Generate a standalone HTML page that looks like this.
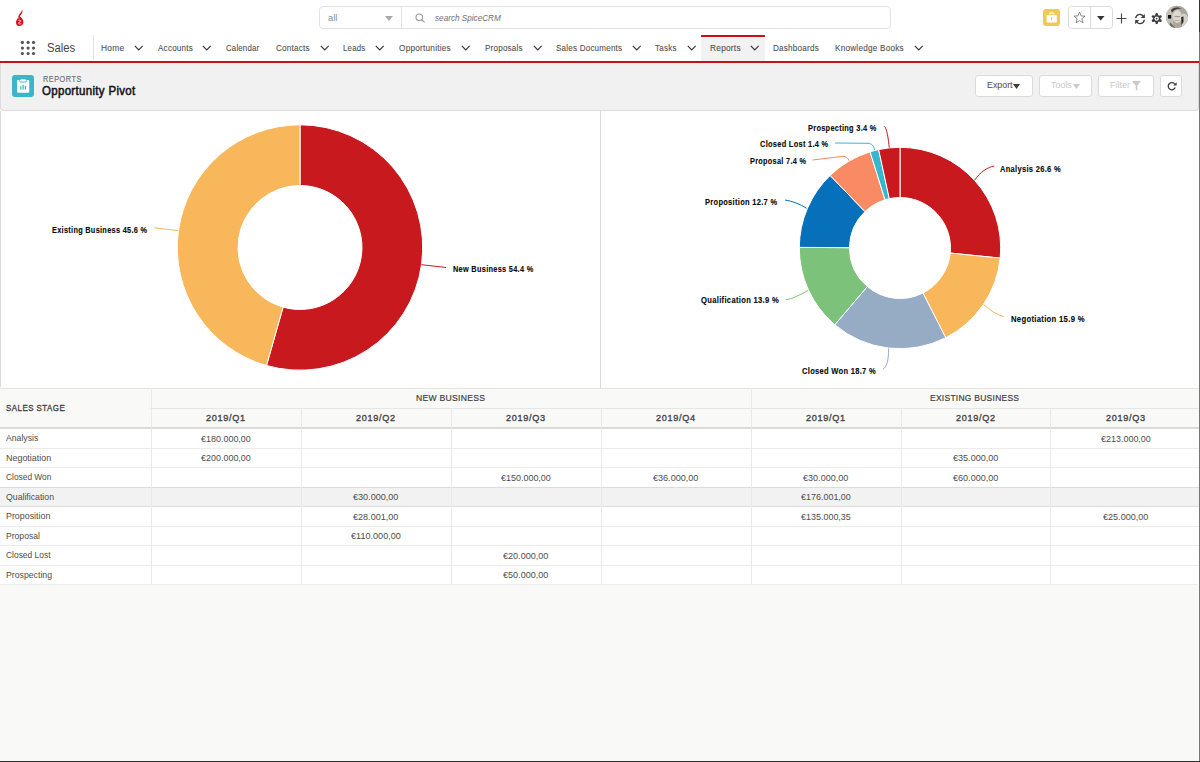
<!DOCTYPE html>
<html><head><meta charset="utf-8"><style>
*{margin:0;padding:0;box-sizing:border-box}
html,body{width:1200px;height:762px;overflow:hidden;background:#f9f9f7;font-family:"Liberation Sans", sans-serif;color:#3e3e3c}
.abs{position:absolute}
.t{position:absolute;white-space:nowrap;line-height:1;transform-origin:0 0}
.btn{position:absolute;top:75px;height:21.5px;background:#fff;border:1px solid #dddbda;border-radius:3px}
</style></head><body>
<div class="abs" style="left:0;top:0;width:1200px;height:61px;background:#fff"></div>
<svg class="abs" style="left:14px;top:8px" width="12" height="20" viewBox="0 0 12 20">
 <path d="M8.2 1.7 C8.9 3.4 8.3 5.2 7.1 6.5 C6.2 7.5 5.6 8.3 5.9 9.4 L4.3 9.6 C4.2 7.8 5 6.4 6.1 5.2 C7 4.2 7.8 3.1 8.2 1.7Z" fill="#d0121c"/>
 <path d="M5.9 8.6 C7.6 9.6 9.4 11.6 9.4 14 C9.4 16.4 7.6 18.1 5.6 18.1 C3.6 18.1 2 16.5 2 14.4 C2 12.4 3.3 11 4.3 9.6 Z" fill="#d0121c"/>
 <path d="M4.6 12.4 C5.6 11.9 7 12.3 6.8 13.3 C6.6 14.2 4.6 14.1 4.5 15.1 C4.4 16 6.2 16.4 7.2 15.5" fill="none" stroke="#fff" stroke-width="0.8"/>
 <path d="M3.6 10.8 C4.2 10.2 4.8 10 5.4 10.2" fill="none" stroke="#fff" stroke-width="0.5"/>
</svg>
<div class="abs" style="left:319px;top:6px;width:572px;height:22.5px;border:1px solid #e2e2e0;border-radius:4px;background:#fff"></div>
<div class="abs" style="left:401px;top:7px;width:1px;height:20.5px;background:#e2e2e0"></div>
<svg class="abs" style="left:384.5px;top:15.5px" width="8" height="5" viewBox="0 0 8 5"><path d="M0 0H8L4 5Z" fill="#a8a8a8"/></svg>
<svg class="abs" style="left:415px;top:13px" width="11" height="10" viewBox="0 0 11 10"><circle cx="4.3" cy="4.3" r="3.3" fill="none" stroke="#9a9a9a" stroke-width="1.1"/><path d="M6.7 6.7 L9.6 9.4" stroke="#9a9a9a" stroke-width="1.2"/></svg>
<div class="abs" style="left:1043px;top:9px;width:17px;height:17px;background:#f1c851;border-radius:3px"></div>
<svg class="abs" style="left:1043px;top:9px" width="17" height="17" viewBox="0 0 17 17"><rect x="3.6" y="6" width="10.2" height="7.4" rx="0.6" fill="#fff"/><path d="M6.2 5.2 A2.6 1.9 0 0 1 11.2 5.2" fill="none" stroke="#fff" stroke-width="1.2"/><path d="M8.7 7.8 C9.6 8.6 9.6 9.8 8.7 10.4 C7.8 9.8 7.8 8.6 8.7 7.8Z M8.3 10.2 H9.1 V11.8 H8.3Z" fill="#f0c64e"/></svg>
<div class="abs" style="left:1068px;top:6px;width:44.5px;height:22.5px;border:1px solid #dddbda;border-radius:3.5px;background:#fff"></div>
<div class="abs" style="left:1090px;top:6.5px;width:1px;height:21.5px;background:#dddbda"></div>
<svg class="abs" style="left:1073px;top:11px" width="13" height="13" viewBox="0 0 13 13"><path d="M6.5 1 L8 4.9 L12 5.1 L8.9 7.6 L9.9 11.8 L6.5 9.6 L3.1 11.8 L4.1 7.6 L1 5.1 L5 4.9Z" fill="none" stroke="#6a6a6a" stroke-width="0.75" stroke-linejoin="round"/></svg>
<svg class="abs" style="left:1097px;top:16px" width="7.5" height="4.5" viewBox="0 0 7.5 4.5"><path d="M0 0H7.5L3.75 4.5Z" fill="#333"/></svg>
<svg class="abs" style="left:1116px;top:13px" width="11" height="11" viewBox="0 0 11 11"><path d="M5.5 0.5V10.5M0.5 5.5H10.5" stroke="#4a4a4a" stroke-width="1.15"/></svg>
<svg class="abs" style="left:1134px;top:12.5px" width="12" height="12" viewBox="0 0 12 12"><path d="M1.7 5.2 A4.1 4.1 0 0 1 9.2 3.2" fill="none" stroke="#3a3a3a" stroke-width="1.3"/><path d="M10.3 6.8 A4.1 4.1 0 0 1 2.8 8.8" fill="none" stroke="#3a3a3a" stroke-width="1.3"/><path d="M10.8 0.9 V5 H6.7Z" fill="#3a3a3a"/><path d="M1.2 11.2 V7.1 H5.3Z" fill="#3a3a3a"/></svg>
<svg class="abs" style="left:1151px;top:13px" width="12" height="12" viewBox="0 0 12 12"><g fill="#3a3a3a"><circle cx="5.7" cy="5.6" r="3.7"/><circle cx="5.7" cy="1.4" r="1.35"/><circle cx="5.7" cy="9.8" r="1.35"/><circle cx="2.06" cy="3.5" r="1.35"/><circle cx="9.34" cy="3.5" r="1.35"/><circle cx="2.06" cy="7.7" r="1.35"/><circle cx="9.34" cy="7.7" r="1.35"/></g><circle cx="5.7" cy="5.6" r="2.2" fill="#fff"/><circle cx="5.7" cy="5.6" r="0.9" fill="#3a3a3a"/></svg>
<svg class="abs" style="left:1165px;top:4.5px" width="24" height="24" viewBox="0 0 24 24"><defs><clipPath id="avc"><circle cx="12" cy="11.8" r="11.1"/></clipPath></defs><g clip-path="url(#avc)"><rect width="24" height="24" fill="#aaa69c"/><rect x="0" y="0" width="8" height="24" fill="#c4c0b5"/><path d="M17 9 C20 8 23 10 23 14 L23 24 H17Z" fill="#d6d2c8"/><ellipse cx="12.3" cy="11.5" rx="4.6" ry="6.5" fill="#dcd8ce"/><path d="M6 5 C8 2 14 1.5 17 4 C15 3.5 12 3.6 9.5 5 C8.5 5.6 7.5 6.5 7 8Z" fill="#3c3a36"/><rect x="3" y="10" width="3.2" height="3.6" fill="#111"/><path d="M16.2 12 L18.5 11.5 L18.5 17 L16.5 20Z" fill="#2f2d2a"/><path d="M5 17 C7 19 9 22 12 24 H4Z" fill="#6f6b62"/><path d="M9.5 11.6 H15" stroke="#8a867c" stroke-width="0.8"/><path d="M10 15.5 H14.5" stroke="#a29e94" stroke-width="0.7"/></g></svg>
<svg class="abs" style="left:20px;top:40px" width="16" height="16" viewBox="0 0 16 16"><g fill="#555"><circle cx="2.4" cy="2.4" r="1.6"/><circle cx="8.1" cy="2.4" r="1.6"/><circle cx="13.5" cy="2.4" r="1.6"/><circle cx="2.4" cy="8.1" r="1.6"/><circle cx="8.1" cy="8.1" r="1.6"/><circle cx="13.5" cy="8.1" r="1.6"/><circle cx="2.4" cy="13.5" r="1.6"/><circle cx="8.1" cy="13.5" r="1.6"/><circle cx="13.5" cy="13.5" r="1.6"/></g></svg>
<div class="abs" style="left:93px;top:35px;width:1px;height:25px;background:#e4e4e2"></div>
<div class="abs" style="left:701px;top:35px;width:64px;height:26px;background:#f2f2f2"></div>
<div class="abs" style="left:701px;top:35px;width:64px;height:2px;background:#c8101b"></div>
<svg class="abs" style="left:133.7px;top:45px" width="9.5" height="6.5" viewBox="0 0 9.5 6.5"><path d="M0.8 0.8 L4.75 4.9 L8.7 0.8" fill="none" stroke="#333" stroke-width="1.15"/></svg>
<svg class="abs" style="left:202.2px;top:45px" width="9.5" height="6.5" viewBox="0 0 9.5 6.5"><path d="M0.8 0.8 L4.75 4.9 L8.7 0.8" fill="none" stroke="#333" stroke-width="1.15"/></svg>
<svg class="abs" style="left:319.7px;top:45px" width="9.5" height="6.5" viewBox="0 0 9.5 6.5"><path d="M0.8 0.8 L4.75 4.9 L8.7 0.8" fill="none" stroke="#333" stroke-width="1.15"/></svg>
<svg class="abs" style="left:375.2px;top:45px" width="9.5" height="6.5" viewBox="0 0 9.5 6.5"><path d="M0.8 0.8 L4.75 4.9 L8.7 0.8" fill="none" stroke="#333" stroke-width="1.15"/></svg>
<svg class="abs" style="left:460.5px;top:45px" width="9.5" height="6.5" viewBox="0 0 9.5 6.5"><path d="M0.8 0.8 L4.75 4.9 L8.7 0.8" fill="none" stroke="#333" stroke-width="1.15"/></svg>
<svg class="abs" style="left:532.7px;top:45px" width="9.5" height="6.5" viewBox="0 0 9.5 6.5"><path d="M0.8 0.8 L4.75 4.9 L8.7 0.8" fill="none" stroke="#333" stroke-width="1.15"/></svg>
<svg class="abs" style="left:631.7px;top:45px" width="9.5" height="6.5" viewBox="0 0 9.5 6.5"><path d="M0.8 0.8 L4.75 4.9 L8.7 0.8" fill="none" stroke="#333" stroke-width="1.15"/></svg>
<svg class="abs" style="left:686.5px;top:45px" width="9.5" height="6.5" viewBox="0 0 9.5 6.5"><path d="M0.8 0.8 L4.75 4.9 L8.7 0.8" fill="none" stroke="#333" stroke-width="1.15"/></svg>
<svg class="abs" style="left:749.7px;top:45px" width="9.5" height="6.5" viewBox="0 0 9.5 6.5"><path d="M0.8 0.8 L4.75 4.9 L8.7 0.8" fill="none" stroke="#333" stroke-width="1.15"/></svg>
<svg class="abs" style="left:913.5px;top:45px" width="9.5" height="6.5" viewBox="0 0 9.5 6.5"><path d="M0.8 0.8 L4.75 4.9 L8.7 0.8" fill="none" stroke="#333" stroke-width="1.15"/></svg>
<div class="abs" style="left:0;top:61px;width:1200px;height:2px;background:#c8101b"></div>
<div class="abs" style="left:0;top:63px;width:1199px;height:48px;background:#f1f1f1;border:1px solid #dcdcdc;border-top:none;border-radius:0 0 4px 4px"></div>
<div class="abs" style="left:12px;top:75px;width:22px;height:22px;background:#3ab6c8;border-radius:3px"></div>
<svg class="abs" style="left:12px;top:75px" width="22" height="22" viewBox="0 0 22 22"><rect x="5" y="5" width="12.2" height="12.8" rx="1.2" fill="#fff"/><rect x="7.6" y="3.9" width="7" height="3.2" rx="1.5" fill="#fff" stroke="#3ab6c8" stroke-width="0.9"/><g fill="#3ab6c8"><rect x="8.2" y="11.2" width="1.2" height="3.4"/><rect x="10.5" y="9.8" width="1.2" height="4.8"/><rect x="12.8" y="10.8" width="1.2" height="3.8"/></g></svg>
<div class="btn" style="left:975px;width:58px"><svg style="position:absolute;left:37px;top:7.5px" width="7" height="5" viewBox="0 0 7 5"><path d="M0 0H7L3.5 5Z" fill="#3e3e3c"/></svg></div>
<div class="btn" style="left:1038.5px;width:53.5px"><svg style="position:absolute;left:33.5px;top:7.5px" width="7" height="5" viewBox="0 0 7 5"><path d="M0 0H7L3.5 5Z" fill="#c9c9c9"/></svg></div>
<div class="btn" style="left:1098px;width:56px"><svg style="position:absolute;left:33px;top:4.5px" width="9" height="10" viewBox="0 0 9 10"><path d="M0 0H9L5.3 4.5V10L3.7 8.6V4.5Z" fill="#c9c9c9"/></svg></div>
<div class="btn" style="left:1160px;width:22px"><svg style="position:absolute;left:5.5px;top:5.5px" width="10" height="9" viewBox="0 0 10 9"><path d="M7.8 2.2 A3.6 3.6 0 1 0 8.2 5.6" fill="none" stroke="#3e3e3c" stroke-width="1.3"/><path d="M9.6 0.2 V3.6 H6.2Z" fill="#3e3e3c"/></svg></div>
<div class="abs" style="left:0;top:111px;width:1199px;height:277px;background:#fff"></div>
<div class="abs" style="left:0;top:111px;width:1px;height:276px;background:#dddbda"></div>
<div class="abs" style="left:600px;top:111px;width:1px;height:277px;background:#dddbda"></div>
<svg class="abs" style="left:0;top:0" width="1200" height="400" viewBox="0 0 1200 400">
<path d="M300.00 124.80A122.7 122.7 0 1 1 266.51 365.54L283.08 307.15A62 62 0 1 0 300.00 185.50Z" fill="#c8191e" stroke="#fff" stroke-width="1" stroke-linejoin="round"/>
<path d="M266.51 365.54A122.7 122.7 0 0 1 300.00 124.80L300.00 185.50A62 62 0 0 0 283.08 307.15Z" fill="#f9b75b" stroke="#fff" stroke-width="1" stroke-linejoin="round"/>
<path d="M900.00 147.30A100.7 100.7 0 0 1 1000.19 258.11L950.25 253.07A50.5 50.5 0 0 0 900.00 197.50Z" fill="#c8191e" stroke="#fff" stroke-width="1" stroke-linejoin="round"/>
<path d="M1000.19 258.11A100.7 100.7 0 0 1 945.72 337.72L922.93 293.00A50.5 50.5 0 0 0 950.25 253.07Z" fill="#f9b75b" stroke="#fff" stroke-width="1" stroke-linejoin="round"/>
<path d="M945.72 337.72A100.7 100.7 0 0 1 834.84 324.78L867.32 286.50A50.5 50.5 0 0 0 922.93 293.00Z" fill="#96abc4" stroke="#fff" stroke-width="1" stroke-linejoin="round"/>
<path d="M834.84 324.78A100.7 100.7 0 0 1 799.30 247.37L849.50 247.68A50.5 50.5 0 0 0 867.32 286.50Z" fill="#7cc27b" stroke="#fff" stroke-width="1" stroke-linejoin="round"/>
<path d="M799.30 247.37A100.7 100.7 0 0 1 830.15 175.46L864.97 211.62A50.5 50.5 0 0 0 849.50 247.68Z" fill="#0670ba" stroke="#fff" stroke-width="1" stroke-linejoin="round"/>
<path d="M830.15 175.46A100.7 100.7 0 0 1 870.09 151.85L885.00 199.78A50.5 50.5 0 0 0 864.97 211.62Z" fill="#f88a64" stroke="#fff" stroke-width="1" stroke-linejoin="round"/>
<path d="M870.09 151.85A100.7 100.7 0 0 1 878.65 149.59L889.29 198.65A50.5 50.5 0 0 0 885.00 199.78Z" fill="#35b8cf" stroke="#fff" stroke-width="1" stroke-linejoin="round"/>
<path d="M878.65 149.59A100.7 100.7 0 0 1 900.00 147.30L900.00 197.50A50.5 50.5 0 0 0 889.29 198.65Z" fill="#c8191e" stroke="#fff" stroke-width="1" stroke-linejoin="round"/>
<path d="M154 227.8 L178 230.6" stroke="#f9b75b" fill="none" stroke-width="1"/>
<path d="M421.5 264.7 L446 267.5" stroke="#c8191e" fill="none" stroke-width="1"/>
<path d="M884.2 126.3 C887 128 888.5 140 889.2 147.5" stroke="#c8191e" fill="none" stroke-width="1"/>
<path d="M835 143 L868 143.3 C872 143.5 874 146 874.7 150" stroke="#35b8cf" fill="none" stroke-width="1"/>
<path d="M812.5 160 L843 156.3 C846 156.3 848 158 849.2 160.8" stroke="#f88a64" fill="none" stroke-width="1"/>
<path d="M785 200 C792 201 800 204 806.7 208.3" stroke="#0670ba" fill="none" stroke-width="1"/>
<path d="M785.8 299.7 C792 299 800 295 808.3 290.3" stroke="#7cc27b" fill="none" stroke-width="1"/>
<path d="M883 369.2 C887 367 888.5 360 888.7 348.3" stroke="#96abc4" fill="none" stroke-width="1"/>
<path d="M994.2 166 C988 167 980 172 974.6 180.2" stroke="#c8191e" fill="none" stroke-width="1"/>
<path d="M1003.7 316.4 C997 315 990 310 983.6 304.6" stroke="#f9b75b" fill="none" stroke-width="1"/>
</svg>
<div class="abs" style="left:0;top:388px;width:1199px;height:40px;background:#f9f9f7"></div>
<div class="abs" style="top:388px;left:0;width:1199px;height:1px;background:#e4e4e2"></div>
<div class="abs" style="top:407.5px;left:150px;width:1049px;height:1px;background:#e6e6e4"></div>
<div class="abs" style="left:0;top:428px;width:1199px;height:20px;background:#fff"></div>
<div class="abs" style="left:0;top:448px;width:1199px;height:19px;background:#fff"></div>
<div class="abs" style="left:0;top:467px;width:1199px;height:20px;background:#fff"></div>
<div class="abs" style="left:0;top:487px;width:1199px;height:19px;background:#f2f2f2"></div>
<div class="abs" style="left:0;top:506px;width:1199px;height:20px;background:#fff"></div>
<div class="abs" style="left:0;top:526px;width:1199px;height:19px;background:#fff"></div>
<div class="abs" style="left:0;top:545px;width:1199px;height:20px;background:#fff"></div>
<div class="abs" style="left:0;top:565px;width:1199px;height:19px;background:#fff"></div>
<div class="abs" style="top:448px;left:0;width:1199px;height:1px;background:#ececeb"></div>
<div class="abs" style="top:467px;left:0;width:1199px;height:1px;background:#ececeb"></div>
<div class="abs" style="top:487px;left:0;width:1199px;height:1px;background:#dcdcda"></div>
<div class="abs" style="top:506px;left:0;width:1199px;height:1px;background:#dcdcda"></div>
<div class="abs" style="top:526px;left:0;width:1199px;height:1px;background:#ececeb"></div>
<div class="abs" style="top:545px;left:0;width:1199px;height:1px;background:#ececeb"></div>
<div class="abs" style="top:565px;left:0;width:1199px;height:1px;background:#ececeb"></div>
<div class="abs" style="top:584px;left:0;width:1199px;height:1px;background:#ececeb"></div>
<div class="abs" style="top:427px;left:0;width:1199px;height:2px;background:#dddbda"></div>
<div class="abs" style="left:151px;top:388px;width:1px;height:196px;background:#e9e9e8"></div>
<div class="abs" style="left:301px;top:408px;width:1px;height:176px;background:#e9e9e8"></div>
<div class="abs" style="left:451px;top:408px;width:1px;height:176px;background:#e9e9e8"></div>
<div class="abs" style="left:601px;top:408px;width:1px;height:176px;background:#e9e9e8"></div>
<div class="abs" style="left:751px;top:388px;width:1px;height:196px;background:#e9e9e8"></div>
<div class="abs" style="left:901px;top:408px;width:1px;height:176px;background:#e9e9e8"></div>
<div class="abs" style="left:1050px;top:408px;width:1px;height:176px;background:#e9e9e8"></div>
<div class="t" style="left:51.57px;top:225.66px;font-size:8.43px;font-weight:bold;letter-spacing:0.35px;-webkit-text-stroke:0.12px #0a0a0a;color:#0a0a0a;transform:scaleX(0.8700);">Existing Business 45.6 %</div>
<div class="t" style="left:453.17px;top:265.16px;font-size:8.43px;font-weight:bold;letter-spacing:0.35px;-webkit-text-stroke:0.12px #0a0a0a;color:#0a0a0a;transform:scaleX(0.8719);">New Business 54.4 %</div>
<div class="t" style="left:807.97px;top:123.86px;font-size:8.43px;font-weight:bold;letter-spacing:0.35px;-webkit-text-stroke:0.12px #0a0a0a;color:#0a0a0a;transform:scaleX(0.8739);">Prospecting 3.4 %</div>
<div class="t" style="left:759.67px;top:140.36px;font-size:8.43px;font-weight:bold;letter-spacing:0.35px;-webkit-text-stroke:0.12px #0a0a0a;color:#0a0a0a;transform:scaleX(0.8779);">Closed Lost 1.4 %</div>
<div class="t" style="left:749.67px;top:157.06px;font-size:8.43px;font-weight:bold;letter-spacing:0.35px;-webkit-text-stroke:0.12px #0a0a0a;color:#0a0a0a;transform:scaleX(0.8672);">Proposal 7.4 %</div>
<div class="t" style="left:705.46px;top:197.86px;font-size:8.43px;font-weight:bold;letter-spacing:0.35px;-webkit-text-stroke:0.12px #0a0a0a;color:#0a0a0a;transform:scaleX(0.8867);">Proposition 12.7 %</div>
<div class="t" style="left:700.96px;top:296.36px;font-size:8.43px;font-weight:bold;letter-spacing:0.35px;-webkit-text-stroke:0.12px #0a0a0a;color:#0a0a0a;transform:scaleX(0.9021);">Qualification 13.9 %</div>
<div class="t" style="left:802.16px;top:367.06px;font-size:8.43px;font-weight:bold;letter-spacing:0.35px;-webkit-text-stroke:0.12px #0a0a0a;color:#0a0a0a;transform:scaleX(0.8913);">Closed Won 18.7 %</div>
<div class="t" style="left:1000.46px;top:164.56px;font-size:8.43px;font-weight:bold;letter-spacing:0.35px;-webkit-text-stroke:0.12px #0a0a0a;color:#0a0a0a;transform:scaleX(0.8897);">Analysis 26.6 %</div>
<div class="t" style="left:1011.16px;top:314.56px;font-size:8.43px;font-weight:bold;letter-spacing:0.35px;-webkit-text-stroke:0.12px #0a0a0a;color:#0a0a0a;transform:scaleX(0.9090);">Negotiation 15.9 %</div>
<div class="t" style="left:101.32px;top:43.52px;font-size:9.30px;letter-spacing:0.25px;-webkit-text-stroke:0.1px #505050;color:#505050;transform:scaleX(0.9041);">Home</div>
<div class="t" style="left:157.64px;top:43.52px;font-size:9.30px;letter-spacing:0.25px;-webkit-text-stroke:0.1px #505050;color:#505050;transform:scaleX(0.8702);">Accounts</div>
<div class="t" style="left:226.35px;top:43.52px;font-size:9.30px;letter-spacing:0.25px;-webkit-text-stroke:0.1px #505050;color:#505050;transform:scaleX(0.8387);">Calendar</div>
<div class="t" style="left:276.33px;top:43.52px;font-size:9.30px;letter-spacing:0.25px;-webkit-text-stroke:0.1px #505050;color:#505050;transform:scaleX(0.8741);">Contacts</div>
<div class="t" style="left:343.35px;top:43.52px;font-size:9.30px;letter-spacing:0.25px;-webkit-text-stroke:0.1px #505050;color:#505050;transform:scaleX(0.8436);">Leads</div>
<div class="t" style="left:399.33px;top:43.52px;font-size:9.30px;letter-spacing:0.25px;-webkit-text-stroke:0.1px #505050;color:#505050;transform:scaleX(0.8866);">Opportunities</div>
<div class="t" style="left:484.64px;top:43.52px;font-size:9.30px;letter-spacing:0.25px;-webkit-text-stroke:0.1px #505050;color:#505050;transform:scaleX(0.8675);">Proposals</div>
<div class="t" style="left:555.84px;top:43.52px;font-size:9.30px;letter-spacing:0.25px;-webkit-text-stroke:0.1px #505050;color:#505050;transform:scaleX(0.8654);">Sales Documents</div>
<div class="t" style="left:655.14px;top:43.52px;font-size:9.30px;letter-spacing:0.25px;-webkit-text-stroke:0.1px #505050;color:#505050;transform:scaleX(0.8645);">Tasks</div>
<div class="t" style="left:709.62px;top:43.52px;font-size:9.30px;letter-spacing:0.25px;-webkit-text-stroke:0.1px #505050;color:#505050;transform:scaleX(0.8985);">Reports</div>
<div class="t" style="left:773.43px;top:43.52px;font-size:9.30px;letter-spacing:0.25px;-webkit-text-stroke:0.1px #505050;color:#505050;transform:scaleX(0.8742);">Dashboards</div>
<div class="t" style="left:835.43px;top:43.52px;font-size:9.30px;letter-spacing:0.25px;-webkit-text-stroke:0.1px #505050;color:#505050;transform:scaleX(0.8801);">Knowledge Books</div>
<div class="t" style="left:47.49px;top:42.42px;font-size:12.50px;color:#444;transform:scaleX(0.8994);">Sales</div>
<div class="t" style="left:42.67px;top:74.62px;font-size:8.72px;letter-spacing:0.6px;-webkit-text-stroke:0.15px #6e7073;color:#6e7073;transform:scaleX(0.8395);">REPORTS</div>
<div class="t" style="left:42.48px;top:84.84px;font-size:12.35px;letter-spacing:0.35px;-webkit-text-stroke:0.55px #16171a;color:#16171a;transform:scaleX(0.9295);">Opportunity Pivot</div>
<div class="t" style="left:327.58px;top:13.62px;font-size:8.72px;color:#8c8c8c;transform:scaleX(1.0640);">all</div>
<div class="t" style="left:435.43px;top:13.75px;font-size:9.16px;font-style:italic;color:#707070;transform:scaleX(0.8921);">search SpiceCRM</div>
<div class="t" style="left:986.60px;top:80.87px;font-size:9.30px;color:#4a4a4a;transform:scaleX(0.9517);">Export</div>
<div class="t" style="left:1050.60px;top:80.87px;font-size:9.30px;color:#c8c8c8;transform:scaleX(0.9595);">Tools</div>
<div class="t" style="left:1109.99px;top:80.87px;font-size:9.30px;color:#c8c8c8;transform:scaleX(0.9693);">Filter</div>
<div class="t" style="left:6.01px;top:434.25px;font-size:9.16px;color:#4d4d4b;transform:scaleX(0.9450);">Analysis</div>
<div class="t" style="left:200.79px;top:434.65px;font-size:9.16px;color:#4d4d4b;transform:scaleX(0.9784);">€180.000,00</div>
<div class="t" style="left:1100.79px;top:434.65px;font-size:9.16px;color:#4d4d4b;transform:scaleX(0.9784);">€213.000,00</div>
<div class="t" style="left:6.00px;top:453.75px;font-size:9.16px;color:#4d4d4b;transform:scaleX(0.9762);">Negotiation</div>
<div class="t" style="left:200.79px;top:454.15px;font-size:9.16px;color:#4d4d4b;transform:scaleX(0.9784);">€200.000,00</div>
<div class="t" style="left:953.02px;top:454.15px;font-size:9.16px;color:#4d4d4b;transform:scaleX(0.9899);">€35.000,00</div>
<div class="t" style="left:6.02px;top:473.25px;font-size:9.16px;color:#4d4d4b;transform:scaleX(0.9138);">Closed Won</div>
<div class="t" style="left:500.79px;top:473.65px;font-size:9.16px;color:#4d4d4b;transform:scaleX(0.9784);">€150.000,00</div>
<div class="t" style="left:653.02px;top:473.65px;font-size:9.16px;color:#4d4d4b;transform:scaleX(0.9899);">€36.000,00</div>
<div class="t" style="left:803.02px;top:473.65px;font-size:9.16px;color:#4d4d4b;transform:scaleX(0.9899);">€30.000,00</div>
<div class="t" style="left:953.02px;top:473.65px;font-size:9.16px;color:#4d4d4b;transform:scaleX(0.9899);">€60.000,00</div>
<div class="t" style="left:6.01px;top:492.75px;font-size:9.16px;color:#4d4d4b;transform:scaleX(0.9530);">Qualification</div>
<div class="t" style="left:353.02px;top:493.15px;font-size:9.16px;color:#4d4d4b;transform:scaleX(0.9899);">€30.000,00</div>
<div class="t" style="left:800.79px;top:493.15px;font-size:9.16px;color:#4d4d4b;transform:scaleX(0.9784);">€176.001,00</div>
<div class="t" style="left:6.00px;top:512.25px;font-size:9.16px;color:#4d4d4b;transform:scaleX(0.9675);">Proposition</div>
<div class="t" style="left:353.02px;top:512.65px;font-size:9.16px;color:#4d4d4b;transform:scaleX(0.9899);">€28.001,00</div>
<div class="t" style="left:800.79px;top:512.65px;font-size:9.16px;color:#4d4d4b;transform:scaleX(0.9784);">€135.000,35</div>
<div class="t" style="left:1103.02px;top:512.65px;font-size:9.16px;color:#4d4d4b;transform:scaleX(0.9899);">€25.000,00</div>
<div class="t" style="left:6.01px;top:531.75px;font-size:9.16px;color:#4d4d4b;transform:scaleX(0.9386);">Proposal</div>
<div class="t" style="left:350.79px;top:532.15px;font-size:9.16px;color:#4d4d4b;transform:scaleX(0.9917);">€110.000,00</div>
<div class="t" style="left:6.02px;top:551.25px;font-size:9.16px;color:#4d4d4b;transform:scaleX(0.9208);">Closed Lost</div>
<div class="t" style="left:503.02px;top:551.65px;font-size:9.16px;color:#4d4d4b;transform:scaleX(0.9899);">€20.000,00</div>
<div class="t" style="left:6.01px;top:570.75px;font-size:9.16px;color:#4d4d4b;transform:scaleX(0.9518);">Prospecting</div>
<div class="t" style="left:503.02px;top:571.15px;font-size:9.16px;color:#4d4d4b;transform:scaleX(0.9899);">€50.000,00</div>
<div class="t" style="left:5.64px;top:403.16px;font-size:9.74px;letter-spacing:0.6px;-webkit-text-stroke:0.35px #444442;color:#444442;transform:scaleX(0.8107);">SALES STAGE</div>
<div class="t" style="left:415.83px;top:393.62px;font-size:9.30px;letter-spacing:0.3px;-webkit-text-stroke:0.2px #3e3e3c;color:#3e3e3c;transform:scaleX(0.9254);">NEW BUSINESS</div>
<div class="t" style="left:930.33px;top:393.62px;font-size:9.30px;letter-spacing:0.3px;-webkit-text-stroke:0.2px #3e3e3c;color:#3e3e3c;transform:scaleX(0.9102);">EXISTING BUSINESS</div>
<div class="t" style="left:205.62px;top:413.18px;font-size:9.59px;letter-spacing:0.7px;-webkit-text-stroke:0.35px #444442;color:#444442;transform:scaleX(0.9535);">2019/Q1</div>
<div class="t" style="left:355.62px;top:413.18px;font-size:9.59px;letter-spacing:0.7px;-webkit-text-stroke:0.35px #444442;color:#444442;transform:scaleX(0.9535);">2019/Q2</div>
<div class="t" style="left:505.62px;top:413.18px;font-size:9.59px;letter-spacing:0.7px;-webkit-text-stroke:0.35px #444442;color:#444442;transform:scaleX(0.9535);">2019/Q3</div>
<div class="t" style="left:655.62px;top:413.18px;font-size:9.59px;letter-spacing:0.7px;-webkit-text-stroke:0.35px #444442;color:#444442;transform:scaleX(0.9535);">2019/Q4</div>
<div class="t" style="left:805.62px;top:413.18px;font-size:9.59px;letter-spacing:0.7px;-webkit-text-stroke:0.35px #444442;color:#444442;transform:scaleX(0.9535);">2019/Q1</div>
<div class="t" style="left:955.62px;top:413.18px;font-size:9.59px;letter-spacing:0.7px;-webkit-text-stroke:0.35px #444442;color:#444442;transform:scaleX(0.9535);">2019/Q2</div>
<div class="t" style="left:1105.62px;top:413.18px;font-size:9.59px;letter-spacing:0.7px;-webkit-text-stroke:0.35px #444442;color:#444442;transform:scaleX(0.9535);">2019/Q3</div>
<div class="abs" style="left:1198px;top:584px;width:1px;height:177px;background:#fff"></div>
<div class="abs" style="left:1199px;top:0;width:1px;height:762px;background:#777"></div>
<div class="abs" style="left:1199px;top:0;width:1px;height:32px;background:#333"></div>
<div class="abs" style="left:0;top:761px;width:1200px;height:1px;background:#2a2a2a"></div>
</body></html>
